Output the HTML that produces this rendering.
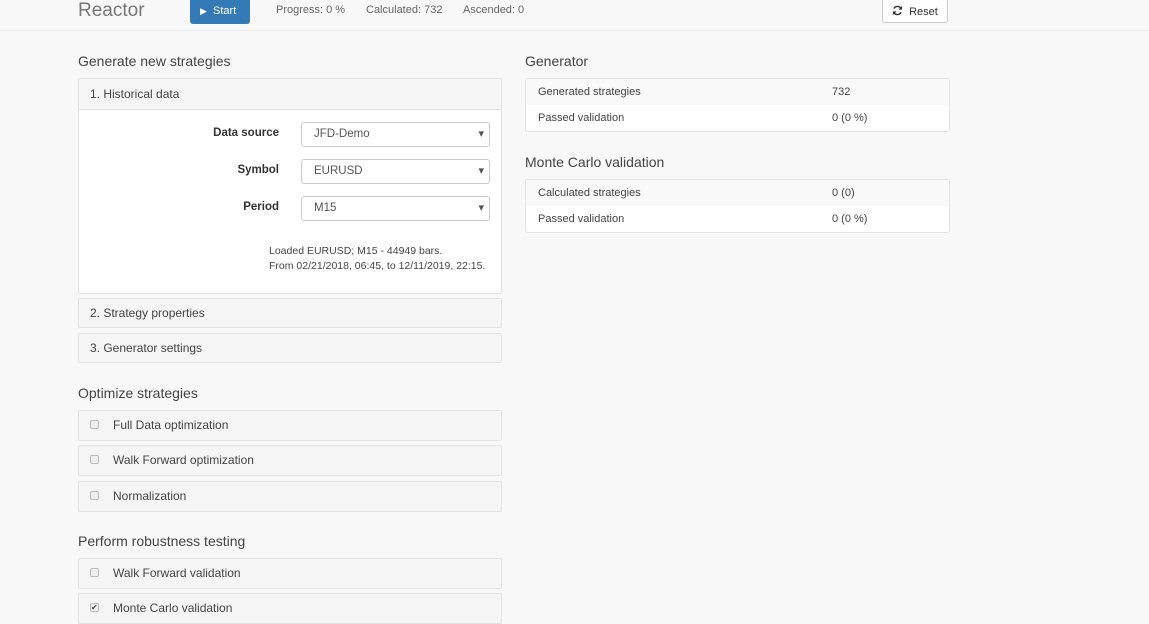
<!DOCTYPE html>
<html><head><style>
*{box-sizing:border-box;margin:0;padding:0}
body{width:1149px;height:616px;overflow:hidden;background:#f8f8f8;font-family:"Liberation Sans",sans-serif;color:#333;position:relative}
.a{position:absolute}
.nav{left:0;top:0;width:1149px;height:31px;background:#f8f8f8;border-bottom:1px solid #ececec}
.h{font-size:14px;color:#444}
.pan{left:78px;width:424px;background:#f5f5f5;border:1px solid #e3e3e3;border-radius:2px;font-size:12px;color:#444}
.lbl{font-size:11.5px;font-weight:bold;color:#333;text-align:right;width:120px}
.sel{left:301px;width:189px;height:25px;border:1px solid #ccc;border-radius:3px;background:#fff;font-size:11.5px;padding:5px 12px;color:#555}
.sel:after{content:"▾";position:absolute;right:5px;top:4px;font-size:11px}
.cb{position:absolute;left:11px;top:9px;width:9px;height:9px;border:1px solid #bbb;border-radius:2px;background:#eee}
.tbl{left:525px;width:425px;background:#fff;border:1px solid #e3e3e3;border-radius:3px;font-size:11px;color:#444}
.tbl div{height:26px;position:relative}
.tbl span{position:absolute;top:7px}
</style></head><body>
<div class="a nav"></div>
<div class="a" style="left:78px;top:0;font-size:19px;color:#777">Reactor</div>
<div class="a" style="left:190px;top:0;width:60px;height:24px;background:#337ab7;border-radius:0 0 3px 3px;color:#fff;font-size:11px;padding:5px 0 0 10px"><span style="font-size:9px">▶</span>&nbsp; Start</div>
<div class="a" style="left:276px;top:4px;font-size:11px;color:#666">Progress: 0 %</div>
<div class="a" style="left:366px;top:4px;font-size:11px;color:#666">Calculated: 732</div>
<div class="a" style="left:463px;top:4px;font-size:11px;color:#666">Ascended: 0</div>
<div class="a" style="left:882px;top:-1px;width:66px;height:24px;background:#fff;border:1px solid #ccc;border-radius:0 0 3px 3px;font-size:11px;padding:5px 0 0 9px;color:#333"><svg width="11" height="11" viewBox="0 0 12 12" style="vertical-align:-1px"><path d="M10 4A4.5 4.5 0 0 0 2 4M2 8a4.5 4.5 0 0 0 8 0" fill="none" stroke="#333" stroke-width="1.6"/><path d="M11 1v4H7zM1 11V7h4z" fill="#333"/></svg>&nbsp; Reset</div>

<div class="a h" style="left:78px;top:53px">Generate new strategies</div>
<div class="a pan" style="top:78px;height:216px;background:#fff">
<div style="background:#f5f5f5;height:31px;border-bottom:1px solid #e3e3e3;padding:8px 11px">1. Historical data</div>
</div>
<div class="a lbl" style="left:159px;top:127px">Data source</div>
<div class="a lbl" style="left:159px;top:164px">Symbol</div>
<div class="a lbl" style="left:159px;top:201px">Period</div>
<div class="a sel" style="top:122px">JFD-Demo</div>
<div class="a sel" style="top:159px">EURUSD</div>
<div class="a sel" style="top:196px">M15</div>
<div class="a" style="left:269px;top:244px;font-size:10.5px;line-height:15px;color:#444">Loaded EURUSD; M15 - 44949 bars.<br>From 02/21/2018, 06:45, to 12/11/2019, 22:15.</div>
<div class="a pan" style="top:298px;height:30px;padding:7px 11px">2. Strategy properties</div>
<div class="a pan" style="top:333px;height:30px;padding:7px 11px">3. Generator settings</div>

<div class="a h" style="left:78px;top:385px">Optimize strategies</div>
<div class="a pan" style="top:410px;height:31px;padding:7px 34px"><i class="cb"></i>Full Data optimization</div>
<div class="a pan" style="top:445px;height:31px;padding:7px 34px"><i class="cb"></i>Walk Forward optimization</div>
<div class="a pan" style="top:481px;height:31px;padding:7px 34px"><i class="cb"></i>Normalization</div>

<div class="a h" style="left:78px;top:533px">Perform robustness testing</div>
<div class="a pan" style="top:558px;height:31px;padding:7px 34px"><i class="cb"></i>Walk Forward validation</div>
<div class="a pan" style="top:593px;height:31px;padding:7px 34px"><i class="cb" style="font-size:8px;line-height:7px;font-style:normal">✔</i>Monte Carlo validation</div>

<div class="a h" style="left:525px;top:53px">Generator</div>
<div class="a tbl" style="top:78px"><div style="background:#f9f9f9"><span style="left:12px">Generated strategies</span><span style="left:306px">732</span></div><div><span style="left:12px">Passed validation</span><span style="left:306px">0 (0 %)</span></div></div>
<div class="a h" style="left:525px;top:154px">Monte Carlo validation</div>
<div class="a tbl" style="top:179px"><div style="background:#f9f9f9"><span style="left:12px">Calculated strategies</span><span style="left:306px">0 (0)</span></div><div><span style="left:12px">Passed validation</span><span style="left:306px">0 (0 %)</span></div></div>
</body></html>
